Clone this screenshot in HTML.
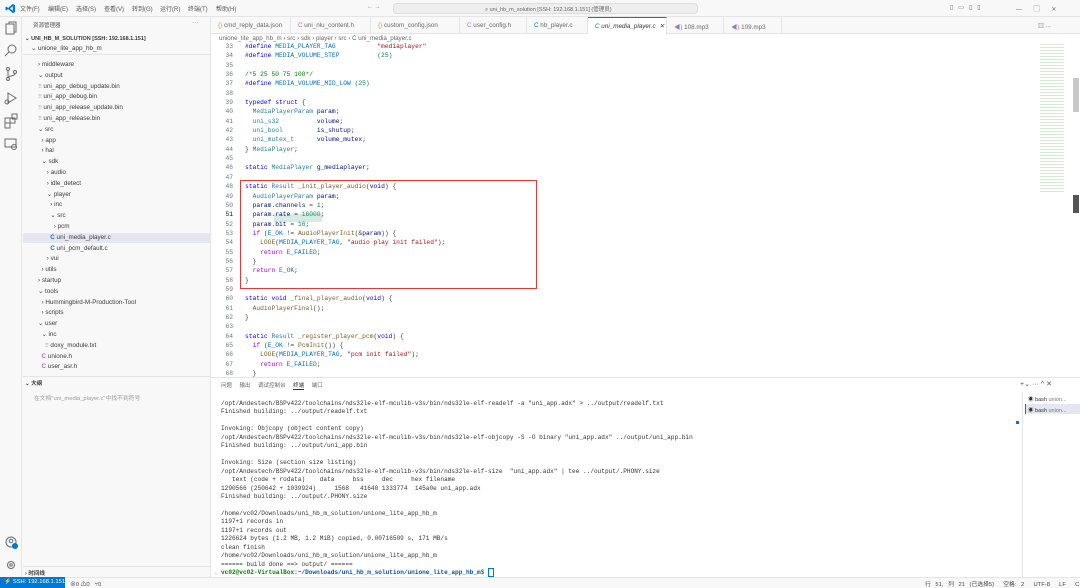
<!DOCTYPE html>
<html><head><meta charset="utf-8"><style>
*{margin:0;padding:0;box-sizing:border-box}
body{width:1080px;height:588px;overflow:hidden;background:#fff;font-family:"Liberation Sans","Noto Sans CJK SC",sans-serif;position:relative;color:#3b3b3b}
.a{position:absolute;white-space:pre}
.title{left:0;top:0;width:1080px;height:17px;background:#f8f8f8;border-bottom:1px solid #e5e5e5}
.menu{font-size:6px;color:#555;top:4px}
.act{left:0;top:17px;width:22px;height:560px;background:#f8f8f8;border-right:1px solid #e5e5e5}
.side{left:22px;top:17px;width:189px;height:560px;background:#f8f8f8;border-right:1px solid #e5e5e5}
.tree{font-size:6.3px;color:#3b3b3b}
.tabs{left:211px;top:17px;width:869px;height:17px;background:#f8f8f8;border-bottom:1px solid #e5e5e5}
.tab{position:absolute;top:17px;height:17px;border-right:1px solid #e5e5e5;font-size:6.3px;color:#666;padding:5px 0 0 7px;white-space:pre}
.code{font-family:"Liberation Mono",monospace;font-size:6.3px;line-height:9.34px}
.ln{left:212px;width:21px;text-align:right;color:#6e7681}
.k{color:#0000ff}.t{color:#267f99}.m{color:#0070c1}.s{color:#a31515}.n{color:#098658}.p{color:#af00db}.f{color:#795e26}.v{color:#001080}.c{color:#008000}
.term{font-family:"Liberation Mono",monospace;font-size:6.1px;line-height:8.45px;color:#333}
.status{left:0;top:577px;width:1080px;height:11px;background:#f8f8f8;border-top:1px solid #e5e5e5;font-size:5.8px;color:#444}
</style></head><body>
<div class="a title"></div>
<svg class="a" style="left:5px;top:3px" width="11" height="11" viewBox="0 0 24 24"><path d="M17 2l5 2.5v15L17 22 7 13l-4 3-2-1V9l2-1 4 3 10-9zM17 7l-6 5 6 5z" fill="#0078d4"/></svg>
<div class="a menu" style="left:20px">文件(F)</div>
<div class="a menu" style="left:48px">编辑(E)</div>
<div class="a menu" style="left:76px">选择(S)</div>
<div class="a menu" style="left:104px">查看(V)</div>
<div class="a menu" style="left:132px">转到(G)</div>
<div class="a menu" style="left:160px">运行(R)</div>
<div class="a menu" style="left:188px">终端(T)</div>
<div class="a menu" style="left:216px">帮助(H)</div>
<div class="a menu" style="left:367px;color:#888">← →</div>
<div class="a" style="left:393px;top:3px;width:305px;height:11px;background:#eee;border:1px solid #ddd;border-radius:4px"></div>
<div class="a menu" style="left:485px;top:4.5px;font-size:5.5px;color:#666">⌕ uni_hb_m_solution [SSH: 192.168.1.151] (管理员)</div>
<div class="a menu" style="left:950px;color:#666;letter-spacing:5px">▯▭▯▯</div>
<div class="a menu" style="left:1016px;color:#666">—&nbsp;&nbsp;&nbsp;&nbsp;&nbsp;&nbsp;&nbsp;▢&nbsp;&nbsp;&nbsp;&nbsp;&nbsp;&nbsp;&nbsp;✕</div>

<div class="a act"></div>
<svg class="a" style="left:0;top:17px" width="22" height="140" viewBox="0 0 22 140" fill="none" stroke="#6a6a6a" stroke-width="1">
<rect x="6" y="7" width="8" height="10"/><path d="M9 7V5h7v10h-2"/>
<circle cx="12" cy="32" r="4"/><path d="M9 35l-4 4"/>
<circle cx="8" cy="52" r="1.5"/><circle cx="8" cy="62" r="1.5"/><circle cx="15" cy="55" r="1.5"/><path d="M8 53.5v7M15 56.5c0 3-7 2-7 4"/>
<path d="M8 76l8 5-8 5z"/><circle cx="7" cy="85" r="2"/>
<rect x="5" y="101" width="5" height="5"/><rect x="10" y="101" width="5" height="5"/><rect x="5" y="106" width="5" height="5"/><rect x="12" y="97" width="5" height="5"/>
<rect x="5" y="122" width="11" height="8"/><circle cx="14" cy="130" r="2.5"/>
</svg>
<svg class="a" style="left:3px;top:535px" width="16" height="40" viewBox="0 0 16 40" fill="none" stroke="#6a6a6a"><circle cx="8" cy="7" r="5"/><circle cx="8" cy="6" r="1.8"/><circle cx="12" cy="11" r="3" fill="#0078d4" stroke="none"/><circle cx="8" cy="30" r="3.5"/><circle cx="8" cy="30" r="1.3"/></svg>

<div class="a side"></div>
<div class="a tree" style="left:33px;top:21px;font-size:5.5px;color:#555">资源管理器</div>
<div class="a tree" style="left:192px;top:19px;color:#777">···</div>
<div class="a tree" style="left:25px;top:36px;font-size:5.5px;font-weight:bold">⌄ UNI_HB_M_SOLUTION [SSH: 192.168.1.151]</div>
<div class="a tree" style="left:31px;top:45px">⌄ unione_lite_app_hb_m</div>
<div class="a" style="left:23px;top:54px;width:188px;height:1px;background:#e5e5e5"></div>
<div class="a" style="left:23px;top:233px;width:188px;height:10px;background:#e4e6f1"></div>
<div class="a tree" style="left:38px;top:60px;line-height:10.8px">› middleware
⌄ output
<span style="color:#aaa">≡</span> uni_app_debug_update.bin
<span style="color:#aaa">≡</span> uni_app_debug.bin
<span style="color:#aaa">≡</span> uni_app_release_update.bin
<span style="color:#aaa">≡</span> uni_app_release.bin
⌄ src
  › app
  › hal
  ⌄ sdk
     › audio
     › idle_detect
     ⌄ player
       › inc
       ⌄ src
         › pcm
       <b style="color:#0078a8">C</b> uni_media_player.c
       <b style="color:#0078a8">C</b> uni_pcm_default.c
     › vui
  › utils
› startup
⌄ tools
  › Hummingbird-M-Production-Tool
  › scripts
⌄ user
  ⌄ inc
    <span style="color:#aaa">≡</span> doxy_module.txt
  <b style="color:#a074c4">C</b> unione.h
  <b style="color:#a074c4">C</b> user_asr.h</div>
<div class="a" style="left:23px;top:376px;width:188px;height:1px;background:#e5e5e5"></div>
<div class="a tree" style="left:25px;top:379px;font-size:5.5px;font-weight:bold">⌄ 大纲</div>
<div class="a tree" style="left:34px;top:393px;color:#999;font-size:5.8px">在文档"uni_media_player.c"中找不到符号</div>
<div class="a" style="left:23px;top:566px;width:188px;height:1px;background:#e5e5e5"></div>
<div class="a tree" style="left:25px;top:569px;font-size:5.5px;font-weight:bold">› 时间线</div>

<div class="a tabs"></div>
<div class="tab" style="left:211px;width:80px"><span style="color:#cba42b">{}</span> cmd_reply_data.json</div>
<div class="tab" style="left:291px;width:80px"><span style="color:#a074c4">C</span> uni_nlu_content.h</div>
<div class="tab" style="left:371px;width:89px"><span style="color:#cba42b">{}</span> custom_config.json</div>
<div class="tab" style="left:460px;width:67px"><span style="color:#a074c4">C</span> user_config.h</div>
<div class="tab" style="left:527px;width:61px"><span style="color:#0078a8">C</span> hb_player.c</div>
<div class="tab" style="left:588px;width:79px;background:#fff;border-top:1px solid #0078d4;height:18px;color:#333;font-style:italic"><span style="color:#0078a8">C</span> uni_media_player.c  ✕</div>
<div class="tab" style="left:667px;width:57px"><span style="color:#a074c4">◀)</span> 108.mp3</div>
<div class="tab" style="left:724px;width:58px"><span style="color:#a074c4">◀)</span> 109.mp3</div>
<div class="a menu" style="left:1038px;top:21px;color:#777">▥ ···</div>
<div class="a" style="left:219px;top:35px;font-size:6.2px;color:#666">unione_lite_app_hb_m › src › sdk › player › src › <span style="color:#0078a8">C</span> uni_media_player.c</div>

<div class="a code ln" style="top:42px">33
34
35
36
37
38
39
40
41
42
43
44
45
46
47
48
49
50
<span style="color:#111">51</span>
52
53
54
55
56
57
58
59
60
61
62
63
64
65
66
67
68</div>
<div class="a" style="left:274px;top:214px;width:48px;height:8px;background:#d6ebe4"></div>
<div class="a code" style="left:245px;top:42px"><span class="k">#define</span> <span class="m">MEDIA_PLAYER_TAG</span>           <span class="s">"mediaplayer"</span>
<span class="k">#define</span> <span class="m">MEDIA_VOLUME_STEP</span>          <span class="n">(25)</span>

<span class="c">/*5 25 50 75 100*/</span>
<span class="k">#define</span> <span class="m">MEDIA_VOLUME_MID_LOW</span> <span class="n">(25)</span>

<span class="k">typedef</span> <span class="k">struct</span> {
  <span class="t">MediaPlayerParam</span> <span class="v">param</span>;
  <span class="t">uni_s32</span>          <span class="v">volume</span>;
  <span class="t">uni_bool</span>         <span class="v">is_shutup</span>;
  <span class="t">uni_mutex_t</span>      <span class="v">volume_mutex</span>;
} <span class="t">MediaPlayer</span>;

<span class="k">static</span> <span class="t">MediaPlayer</span> <span class="v">g_mediaplayer</span>;

<span class="k">static</span> <span class="t">Result</span> <span class="f">_init_player_audio</span>(<span class="k">void</span>) {
  <span class="t">AudioPlayerParam</span> <span class="v">param</span>;
  <span class="v">param</span>.<span class="v">channels</span> = <span class="n">1</span>;
  <span class="v">param</span>.<span class="v">rate</span> = <span class="n">16000</span>;
  <span class="v">param</span>.<span class="v">bit</span> = <span class="n">16</span>;
  <span class="p">if</span> (<span class="m">E_OK</span> != <span class="f">AudioPlayerInit</span>(&amp;<span class="v">param</span>)) {
    <span class="f">LOGE</span>(<span class="m">MEDIA_PLAYER_TAG</span>, <span class="s">"audio play init failed"</span>);
    <span class="p">return</span> <span class="m">E_FAILED</span>;
  }
  <span class="p">return</span> <span class="m">E_OK</span>;
}

<span class="k">static</span> <span class="k">void</span> <span class="f">_final_player_audio</span>(<span class="k">void</span>) {
  <span class="f">AudioPlayerFinal</span>();
}

<span class="k">static</span> <span class="t">Result</span> <span class="f">_register_player_pcm</span>(<span class="k">void</span>) {
  <span class="p">if</span> (<span class="m">E_OK</span> != <span class="f">PcmInit</span>()) {
    <span class="f">LOGE</span>(<span class="m">MEDIA_PLAYER_TAG</span>, <span class="s">"pcm init failed"</span>);
    <span class="p">return</span> <span class="m">E_FAILED</span>;
  }</div>
<div class="a" style="left:240px;top:180px;width:297px;height:109px;border:1.2px solid #e53935"></div>
<div class="a" style="left:1040px;top:43px;width:24px;height:150px;background:repeating-linear-gradient(#fff 0 1px,#cfe3c8 1px 2px,#fff 2px 3px);opacity:.8"></div>
<div class="a" style="left:1073px;top:78px;width:6px;height:34px;background:#c8c8c8"></div>
<div class="a" style="left:1073px;top:195px;width:6px;height:18px;background:#555"></div>

<div class="a" style="left:211px;top:377px;width:869px;height:1px;background:#e5e5e5"></div>
<div class="a" style="left:221px;top:381px;font-size:5.5px;color:#666;word-spacing:6px">问题 输出 调试控制台 <span style="color:#333;border-bottom:1px solid #333">终端</span> 端口</div>
<div class="a" style="left:1020px;top:380px;font-size:7px;color:#555">+⌄ ··· ^ ✕</div>
<div class="a" style="left:1022px;top:392px;width:1px;height:185px;background:#e5e5e5"></div>
<div class="a" style="left:1028px;top:395px;font-size:5.5px;color:#333">◉ bash <span style="color:#777">union...</span></div>
<div class="a" style="left:1025px;top:404px;width:55px;height:10px;background:#e4e6f1;border-left:1px solid #0078d4"></div>
<div class="a" style="left:1028px;top:406px;font-size:5.5px;color:#333">◉ bash <span style="color:#777">union...</span></div>
<div class="a" style="left:1016px;top:421px;width:3px;height:3px;background:#0078d4"></div>
<div class="a term" style="left:221px;top:400px">/opt/Andestech/BSPv422/toolchains/nds32le-elf-mculib-v3s/bin/nds32le-elf-readelf -a "uni_app.adx" &gt; ../output/readelf.txt
Finished building: ../output/readelf.txt

Invoking: Objcopy (object content copy)
/opt/Andestech/BSPv422/toolchains/nds32le-elf-mculib-v3s/bin/nds32le-elf-objcopy -S -O binary "uni_app.adx" ../output/uni_app.bin
Finished building: ../output/uni_app.bin

Invoking: Size (section size listing)
/opt/Andestech/BSPv422/toolchains/nds32le-elf-mculib-v3s/bin/nds32le-elf-size  "uni_app.adx" | tee ../output/.PHONY.size
   text (code + rodata)    data     bss     dec     hex filename
1290566 (250642 + 1039924)     1568   41640 1333774  145a0e uni_app.adx
Finished building: ../output/.PHONY.size

/home/vc02/Downloads/uni_hb_m_solution/unione_lite_app_hb_m
1197+1 records in
1197+1 records out
1226624 bytes (1.2 MB, 1.2 MiB) copied, 0.00716509 s, 171 MB/s
clean finish
/home/vc02/Downloads/uni_hb_m_solution/unione_lite_app_hb_m
====== build done ==&gt; output/ ======
<b style="color:#008000">vc02@vc02-VirtualBox</b>:<b style="color:#0451a5">~/Downloads/uni_hb_m_solution/unione_lite_app_hb_m</b>$ <span style="border:1px solid #0078d4">&nbsp;</span></div>
<div class="a" style="left:214px;top:571px;font-size:5px;color:#999">○</div>

<div class="a status"></div>
<div class="a" style="left:0;top:577px;width:65px;height:11px;background:#0078d4;color:#fff;font-size:5.8px;padding:2px 0 0 4px">⚡ SSH: 192.168.1.151</div>
<div class="a" style="left:70px;top:579px;font-size:5.8px;color:#444">⊗0 ⚠0 &nbsp;&nbsp;⑂0</div>
<div class="a" style="left:925px;top:579px;font-size:5.8px;color:#444;word-spacing:3px">行 51, 列 21 (已选择5) &nbsp;空格: 2 &nbsp;UTF-8 &nbsp;LF &nbsp;C &nbsp;🔔</div>
</body></html>
